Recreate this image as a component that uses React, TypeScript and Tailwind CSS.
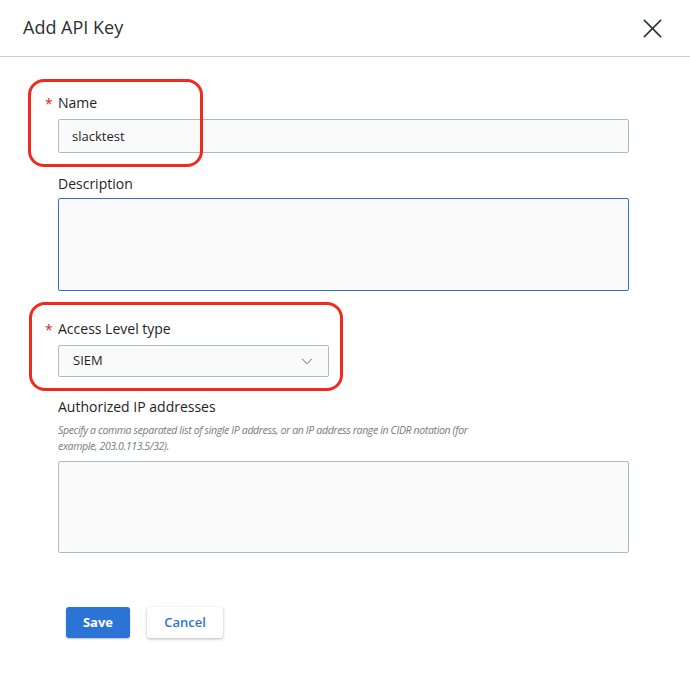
import React, { useState } from 'react';

function Highlight({ className }: { className: string }) {
  return (
    <div
      className={`pointer-events-none absolute rounded-[16px] border-[3px] border-[#ef2b20] ${className}`}
    />
  );
}

function Label({ text, required }: { text: string; required?: boolean }) {
  return (
    <div className="relative h-[20px] text-[14px] leading-[20px] text-[#1f2326]">
      {required && (
        <span className="absolute left-[-13px] top-[1px] text-[14px] text-[#d52b1e]">*</span>
      )}
      {text}
    </div>
  );
}

export default function App() {
  const [form, setForm] = useState({
    name: 'slacktest',
    description: '',
    access: 'SIEM',
    ips: ''
  });

  const handleChange = (e: React.ChangeEvent<HTMLInputElement | HTMLTextAreaElement>) => {
    setForm({ ...form, [e.target.name]: e.target.value });
  };

  return (
    <main
      className="relative h-[678px] w-[690px] overflow-hidden bg-white"
      style={{ fontFamily: '"Open Sans", "Noto Sans", sans-serif' }}
    >
      {/* header */}
      <div className="flex h-[57px] items-center justify-between border-b border-[#c5d0d4] pl-[23px] pr-[26px]">
        <h1 className="pb-[2px] text-[18px] text-[#2b3033]">Add API Key</h1>
        <button className="flex h-[24px] w-[24px] items-center justify-center text-[#2b3033]">
          <svg width="21" height="21" viewBox="0 0 22 22" fill="none" stroke="currentColor" strokeWidth="1.6">
            <path d="M2 2 L20 20 M20 2 L2 20" />
          </svg>
        </button>
      </div>

      <form className="flex flex-col pl-[58px] pr-[61px] pt-[36px]">
        {/* name */}
        <div className="relative flex flex-col gap-[6px]">
          <Highlight className="left-[-30px] top-[-14px] h-[88px] w-[175px]" />
          <Label text="Name" required />
          <input
            name="name"
            value={form.name}
            onChange={handleChange}
            className="h-[34px] w-full rounded-[2px] border border-[#b1babf] bg-[#fafafa] px-[13px] text-[13px] text-[#1f2326] outline-none"
          />
        </div>

        {/* description */}
        <div className="mt-[21px] flex flex-col gap-[4px]">
          <Label text="Description" />
          <textarea
            name="description"
            value={form.description}
            onChange={handleChange}
            className="h-[93px] w-full resize-none rounded-[2px] border border-[#2f72d0] bg-[#fafafa] px-[13px] py-[8px] text-[13px] outline-none"
          />
        </div>

        {/* access level */}
        <div className="relative mt-[28px] flex flex-col gap-[6px]">
          <Highlight className="left-[-29px] top-[-17px] h-[89px] w-[314px]" />
          <Label text="Access Level type" required />
          <div className="flex h-[32px] w-[271px] items-center justify-between rounded-[2px] border border-[#b1babf] bg-[#fafafa] pl-[14px] pr-[15px] text-[13px] text-[#1f2326]">
            <span>{form.access}</span>
            <svg width="12" height="7" viewBox="0 0 13 8" fill="none" stroke="#5c6368" strokeWidth="1.1">
              <path d="M1 1 L6.5 6.5 L12 1" />
            </svg>
          </div>
        </div>

        {/* authorized ips */}
        <div className="mt-[20px] flex flex-col">
          <Label text="Authorized IP addresses" />
          <p className="mt-[5px] w-[430px] text-[10.5px] italic leading-[16px] tracking-[-0.35px] text-[#767b7f]">
            Specify a comma separated list of single IP address, or an IP address range in CIDR notation (for
            example, 203.0.113.5/32).
          </p>
          <textarea
            name="ips"
            value={form.ips}
            onChange={handleChange}
            className="mt-[7px] h-[92px] w-full resize-none rounded-[2px] border border-[#b1babf] bg-[#fafafa] px-[13px] py-[8px] text-[13px] outline-none"
          />
        </div>

        {/* actions */}
        <div className="mt-[54px] flex gap-[17px] pl-[8px]">
          <button
            type="button"
            className="h-[31px] w-[64px] rounded-[3px] bg-[#2b74d5] text-[13px] font-bold text-white shadow-[0_1px_2px_rgba(0,0,0,0.25)]"
          >
            Save
          </button>
          <button
            type="button"
            className="h-[31px] w-[76px] rounded-[3px] bg-white text-[13px] font-semibold text-[#2b74d5] shadow-[0_1px_3px_rgba(0,0,0,0.3)]"
          >
            Cancel
          </button>
        </div>
      </form>
    </main>
  );
}
